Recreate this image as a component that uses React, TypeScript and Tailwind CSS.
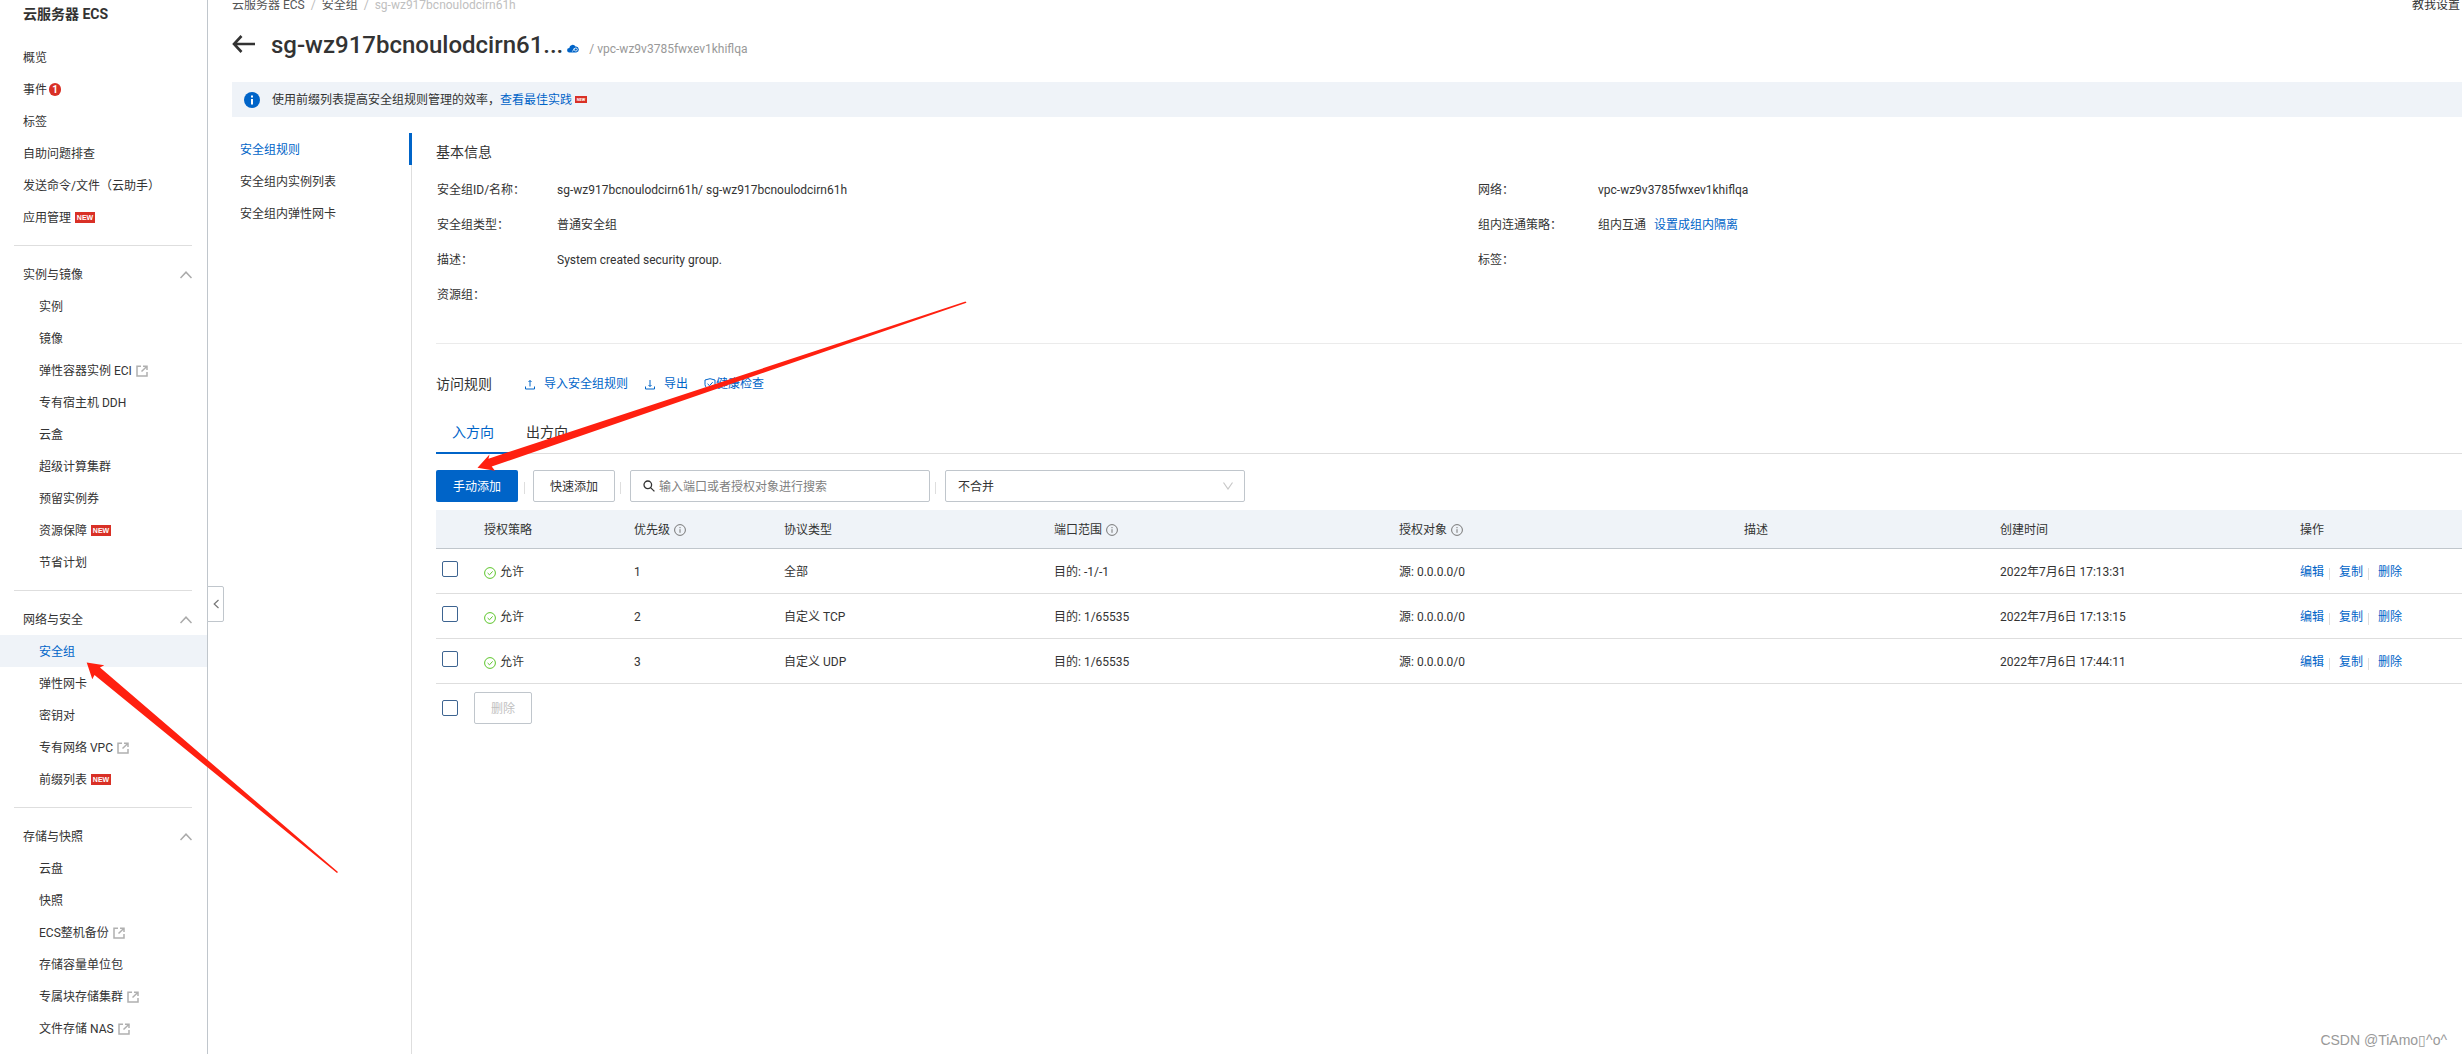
import React from 'react';

interface NavItem {
  label: string;
  external?: boolean;
  isNew?: boolean;
  count?: number;
  active?: boolean;
}

interface NavGroup {
  title: string;
  items: NavItem[];
}

interface Rule {
  priority: number;
  protocol: string;
  port: string;
  source: string;
  createdAt: string;
}

const topItems: NavItem[] = [
  { label: '概览' },
  { label: '事件', count: 1 },
  { label: '标签' },
  { label: '自助问题排查' },
  { label: '发送命令/文件（云助手）' },
  { label: '应用管理', isNew: true },
];

const groups: NavGroup[] = [
  {
    title: '实例与镜像',
    items: [
      { label: '实例' },
      { label: '镜像' },
      { label: '弹性容器实例 ECI', external: true },
      { label: '专有宿主机 DDH' },
      { label: '云盒' },
      { label: '超级计算集群' },
      { label: '预留实例券' },
      { label: '资源保障', isNew: true },
      { label: '节省计划' },
    ],
  },
  {
    title: '网络与安全',
    items: [
      { label: '安全组', active: true },
      { label: '弹性网卡' },
      { label: '密钥对' },
      { label: '专有网络 VPC', external: true },
      { label: '前缀列表', isNew: true },
    ],
  },
  {
    title: '存储与快照',
    items: [
      { label: '云盘' },
      { label: '快照' },
      { label: 'ECS整机备份', external: true },
      { label: '存储容量单位包' },
      { label: '专属块存储集群', external: true },
      { label: '文件存储 NAS', external: true },
    ],
  },
];

const rules: Rule[] = [
  { priority: 1, protocol: '全部', port: '目的: -1/-1', source: '源: 0.0.0.0/0', createdAt: '2022年7月6日 17:13:31' },
  { priority: 2, protocol: '自定义 TCP', port: '目的: 1/65535', source: '源: 0.0.0.0/0', createdAt: '2022年7月6日 17:13:15' },
  { priority: 3, protocol: '自定义 UDP', port: '目的: 1/65535', source: '源: 0.0.0.0/0', createdAt: '2022年7月6日 17:44:11' },
];

function ExternalIcon() {
  return (
    <svg className="ml-1 size-3 shrink-0" viewBox="0 0 12 12" fill="none" stroke="#b0b0b0" strokeWidth="1.5">
      <path d="M5 1.25H1V11h10V7" />
      <path d="M7 1.25h4V5M11 1.25 5.5 6.5" />
    </svg>
  );
}

function InfoIcon() {
  return (
    <svg className="ml-1 size-3" viewBox="0 0 12 12" fill="none" stroke="#777">
      <circle cx="6" cy="6" r="5.4" />
      <path d="M6 5.2v3.6M6 3v1.2" />
    </svg>
  );
}

function NewBadge() {
  return (
    <span className="ml-1 flex h-[11px] w-5 items-center justify-center bg-[#d93026] font-['Liberation_Sans',sans-serif] text-[7px] font-bold text-white">
      NEW
    </span>
  );
}

function NavLink({ item, nested }: { item: NavItem; nested?: boolean }) {
  return (
    <a
      href="#"
      className={`flex h-8 items-center pt-px ${nested ? 'pl-[39px]' : 'pl-[23px]'} ${item.active ? 'bg-[#eff3f8] text-[#0064c8]' : ''}`}
    >
      {item.label}
      {item.external && <ExternalIcon />}
      {item.isNew && <NewBadge />}
      {item.count && (
        <span className="ml-0.5 flex h-[13px] w-3 items-center justify-center rounded-full bg-[#d93026] text-[10px] font-bold text-white">
          {item.count}
        </span>
      )}
    </a>
  );
}

function Sidebar() {
  return (
    <aside className="relative w-52 shrink-0 border-r border-[#c0c6cc]">
      <h2 className="flex h-[41px] items-start pt-1 pl-[23px] text-sm font-bold">云服务器 ECS</h2>
      <nav>
        {topItems.map((item) => (
          <NavLink key={item.label} item={item} />
        ))}
        {groups.map((group) => (
          <div key={group.title}>
            <hr className="my-3 mr-[15px] ml-3.5 border-[#dedede]" />
            <button className="flex h-8 w-full items-center justify-between pt-px pr-[15px] pl-[23px]">
              {group.title}
              <svg className="h-2 w-3" viewBox="0 0 12 8" fill="none" stroke="#aaa" strokeWidth="1.5">
                <path d="M.5 7 6 1.2 11.5 7" />
              </svg>
            </button>
            {group.items.map((item) => (
              <NavLink key={item.label} item={item} nested />
            ))}
          </div>
        ))}
      </nav>
      <button
        aria-label="收起导航"
        className="absolute top-[586px] left-full flex h-9 w-[17px] items-center justify-center rounded-r-xs border border-[#c0c6cc] bg-white"
      >
        <svg className="h-2.5 w-1.5" viewBox="0 0 6 10" fill="none" stroke="#777" strokeWidth="1.2">
          <path d="M5.5 1 1.2 5l4.3 4" />
        </svg>
      </button>
    </aside>
  );
}

function Field({ label, children }: { label: string; children?: React.ReactNode }) {
  return (
    <div className="flex h-[35px] items-center">
      <dt className="w-[120px]">{label}</dt>
      <dd className="flex gap-2">{children}</dd>
    </div>
  );
}

function Separator() {
  return <span className="mt-1 h-3 w-px bg-[#dedede]" />;
}

function Checkbox({ label }: { label: string }) {
  return (
    <input
      type="checkbox"
      aria-label={label}
      className="block size-4 appearance-none rounded-xs border border-[#3d6491] bg-white"
    />
  );
}

function Toolbar() {
  return (
    <div className="flex h-8 items-center">
      <button className="h-8 w-[82px] rounded-xs bg-[#0064c8] pt-px text-white">手动添加</button>
      <span className="flex w-[15px] justify-center pr-0.5"><Separator /></span>
      <button className="h-8 w-[82px] rounded-xs border border-[#c0c6cc] pt-px">快速添加</button>
      <span className="flex w-[15px] justify-center pr-1"><Separator /></span>
      <label className="flex h-8 w-[300px] items-center rounded-xs border border-[#c0c6cc] pl-3">
        <svg className="mr-1 size-3 shrink-0" viewBox="0 0 12 12" fill="none" stroke="#333" strokeWidth="1.3">
          <circle cx="4.8" cy="4.8" r="3.8" />
          <path d="m7.6 7.6 3.8 3.8" />
        </svg>
        <input
          type="text"
          aria-label="搜索规则"
          placeholder="输入端口或者授权对象进行搜索"
          className="w-full pt-px outline-none placeholder:text-[#808080]"
        />
      </label>
      <span className="flex w-[15px] justify-center pr-1"><Separator /></span>
      <div className="relative">
        <select aria-label="合并方式" className="h-8 w-[300px] appearance-none rounded-xs border border-[#c0c6cc] bg-white pt-px pl-3">
          <option>不合并</option>
        </select>
        <svg className="pointer-events-none absolute top-3 right-3 h-2 w-2.5" viewBox="0 0 10 8" fill="none" stroke="#c8c8c8" strokeWidth="1.2">
          <path d="M.5.5 5 7 9.5.5" />
        </svg>
      </div>
    </div>
  );
}

function RulesTable() {
  return (
    <table className="mt-2 w-full table-fixed border-separate border-spacing-0 text-left">
      <colgroup>
        <col className="w-8" />
        <col className="w-[150px]" />
        <col className="w-[150px]" />
        <col className="w-[270px]" />
        <col className="w-[345px]" />
        <col className="w-[345px]" />
        <col />
        <col className="w-[300px]" />
        <col className="w-[178px]" />
      </colgroup>
      <thead className="bg-[#eff3f8]">
        <tr className="h-[39px] *:border-b *:border-[#c0c6cc] *:px-4 *:pt-px *:font-normal">
          <td />
          <th>授权策略</th>
          <th><span className="flex items-center">优先级<InfoIcon /></span></th>
          <th>协议类型</th>
          <th><span className="flex items-center">端口范围<InfoIcon /></span></th>
          <th><span className="flex items-center">授权对象<InfoIcon /></span></th>
          <th>描述</th>
          <th>创建时间</th>
          <th>操作</th>
        </tr>
      </thead>
      <tbody>
        {rules.map((rule) => (
          <tr key={rule.priority} className="h-[45px] *:border-b *:border-[#dedede] *:px-4 *:pt-px">
            <td>
              <div className="-ml-2.5 pb-1.5"><Checkbox label={`选择规则 ${rule.priority}`} /></div>
            </td>
            <td>
              <span className="flex items-center">
                <svg className="mt-0.5 mr-1 size-3" viewBox="0 0 12 12" fill="none" stroke="#5cc52b">
                  <circle cx="6" cy="6" r="5.4" />
                  <path d="m3.6 6 1.9 1.8L8.6 4.4" />
                </svg>
                允许
              </span>
            </td>
            <td>{rule.priority}</td>
            <td>{rule.protocol}</td>
            <td>{rule.port}</td>
            <td>{rule.source}</td>
            <td />
            <td>{rule.createdAt}</td>
            <td>
              <span className="flex items-center text-[#0064c8]">
                <a href="#">编辑</a>
                <span className="flex w-[15px] pl-[5px]"><Separator /></span>
                <a href="#">复制</a>
                <span className="flex w-[15px] pl-[5px]"><Separator /></span>
                <a href="#">删除</a>
              </span>
            </td>
          </tr>
        ))}
      </tbody>
    </table>
  );
}

function Header() {
  return (
    <header>
      <div className="-mt-1 flex h-[18px] items-center justify-between pr-0.5">
        <div className="flex items-center gap-1.5 text-[#555]">
          <a href="#">云服务器 ECS</a>
          <span className="text-[#bbb]">/</span>
          <a href="#">安全组</a>
          <span className="text-[#bbb]">/</span>
          <span className="text-[#c0c0c0]">sg-wz917bcnoulodcirn61h</span>
        </div>
        <a href="#">教我设置</a>
      </div>
      <div className="flex h-[68px] items-center pb-2">
        <a href="#" aria-label="返回" className="mr-4">
          <svg className="h-[18px] w-[23px]" viewBox="0 0 23 18" fill="none" stroke="#333" strokeWidth="2.6">
            <path d="M9.5 1 2 9l7.5 8M2 9h21" />
          </svg>
        </a>
        <h1 className="pt-px text-2xl font-medium">sg-wz917bcnoulodcirn61...</h1>
        <svg className="mt-2 mr-2.5 ml-1 h-[9px] w-3" viewBox="0 0 12 9">
          <path fill="#0064c8" d="M2.5 8.5a2.3 2.3 0 0 1-.2-4.6A3.3 3.3 0 0 1 8.5 2.6a2.9 2.9 0 0 1 .7 5.9z" />
          <circle cx="8.8" cy="5.5" r="1.5" fill="none" stroke="#fff" strokeWidth=".8" />
          <path fill="none" stroke="#fff" strokeWidth=".8" d="M5.5 7.5 7.5 4" />
        </svg>
        <span className="mt-2.5 text-[#999]">/ vpc-wz9v3785fwxev1khiflqa</span>
      </div>
    </header>
  );
}

export default function App() {
  return (
    <div className="relative flex min-h-screen overflow-hidden bg-white font-['Roboto','Noto_Sans_CJK_SC',sans-serif] text-xs text-[#333]">
      <Sidebar />
      <main className="flex min-w-0 flex-1 flex-col pl-6">
        <Header />
        <div className="flex h-[35px] shrink-0 items-center bg-[#eff3f8] pl-3">
          <svg className="mr-3 size-4" viewBox="0 0 16 16">
            <circle cx="8" cy="8" r="8" fill="#0064c8" />
            <path stroke="#fff" strokeWidth="2" d="M8 7v5.5M8 3.5v2" />
          </svg>
          使用前缀列表提高安全组规则管理的效率，
          <a href="#" className="text-[#0064c8]">查看最佳实践</a>
          <span className="ml-[3px] flex h-[7px] w-3 items-center justify-center bg-[#d93026] text-[4px] font-bold text-white">NEW</span>
        </div>
        <div className="mt-4 flex flex-1">
          <nav className="flex w-[180px] shrink-0 flex-col border-r border-[#dedede]">
            <a href="#" className="-mr-px flex h-8 items-center border-r-3 border-[#0064c8] pt-px pl-2 text-[#0064c8]">安全组规则</a>
            <a href="#" className="flex h-8 items-center pt-px pl-2">安全组内实例列表</a>
            <a href="#" className="flex h-8 items-center pt-px pl-2">安全组内弹性网卡</a>
          </nav>
          <div className="min-w-0 flex-1 pl-6">
            <section className="border-b border-[#ebebeb] pb-[31px]">
              <h2 className="mb-px flex h-[38px] items-center text-sm">基本信息</h2>
              <dl className="grid grid-cols-[1041fr_984fr] pl-px">
                <div>
                  <Field label="安全组ID/名称：">sg-wz917bcnoulodcirn61h/ sg-wz917bcnoulodcirn61h</Field>
                  <Field label="安全组类型：">普通安全组</Field>
                  <Field label="描述：">System created security group.</Field>
                  <Field label="资源组：" />
                </div>
                <div>
                  <Field label="网络：">vpc-wz9v3785fwxev1khiflqa</Field>
                  <Field label="组内连通策略：">
                    组内互通
                    <a href="#" className="text-[#0064c8]">设置成组内隔离</a>
                  </Field>
                  <Field label="标签：" />
                </div>
              </dl>
            </section>
            <section>
              <div className="flex items-center pt-[30px] text-[#0064c8]">
                <h2 className="mr-8 text-sm text-[#333]">访问规则</h2>
                <button className="mr-4 flex items-center gap-2">
                  <svg className="size-3" viewBox="0 0 12 12" fill="none" stroke="currentColor">
                    <path d="M1.5 8.5V11h9V8.5M6 8.5v-6M4.5 4 6 2.5 7.5 4" />
                  </svg>
                  导入安全组规则
                </button>
                <button className="mr-4 flex items-center gap-2">
                  <svg className="size-3" viewBox="0 0 12 12" fill="none" stroke="currentColor">
                    <path d="M1.5 8.5V11h9V8.5M6 2v6.5M4.5 7 6 8.5 7.5 7" />
                  </svg>
                  导出
                </button>
                <button className="flex items-center">
                  <svg className="size-3" viewBox="0 0 12 12" fill="none" stroke="currentColor">
                    <path d="M6 .7 11 2v4.5C11 9 8.5 10.5 6 11.4 3.5 10.5 1 9 1 6.5V2z" />
                    <path d="m3.5 5.8 2 1.9 3.2-3.5" />
                  </svg>
                  健康检查
                </button>
              </div>
              <div role="tablist" className="mt-5 mb-4 flex h-10 border-b border-[#dedede] text-sm">
                <button role="tab" aria-selected="true" className="-mb-px border-b-2 border-[#0064c8] px-4 pb-0.5 text-[#0064c8]">入方向</button>
                <button role="tab" aria-selected="false" className="-mb-px border-b-2 border-transparent px-4 pb-0.5">出方向</button>
              </div>
              <Toolbar />
              <RulesTable />
              <div className="mt-2 flex items-center pl-1.5">
                <Checkbox label="全选" />
                <button disabled className="ml-4 h-8 w-[58px] rounded-xs border border-[#c0c6cc] pt-px text-[#c1c1c1]">删除</button>
              </div>
            </section>
          </div>
        </div>
      </main>
      {/* Hand-drawn pointers over the page */}
      <svg className="pointer-events-none absolute top-0 left-0 h-[900px] w-[1000px]" viewBox="0 0 1000 900" fill="#ff2010">
        <path d="M477.5 467.7 489.5 454.5 488.5 458.7 965.5 301.5 966.5 302.7 491.7 466.5 495 470.7z" />
        <path d="M86.7 662.5 104.3 665.3 100 667.5 338 872 337 873 94.5 675 92.3 679.3z" />
      </svg>
      <span className="absolute right-[15px] bottom-1 font-['Liberation_Sans',sans-serif] text-sm text-[#999]">
        CSDN @TiAmo▯^o^
      </span>
    </div>
  );
}
